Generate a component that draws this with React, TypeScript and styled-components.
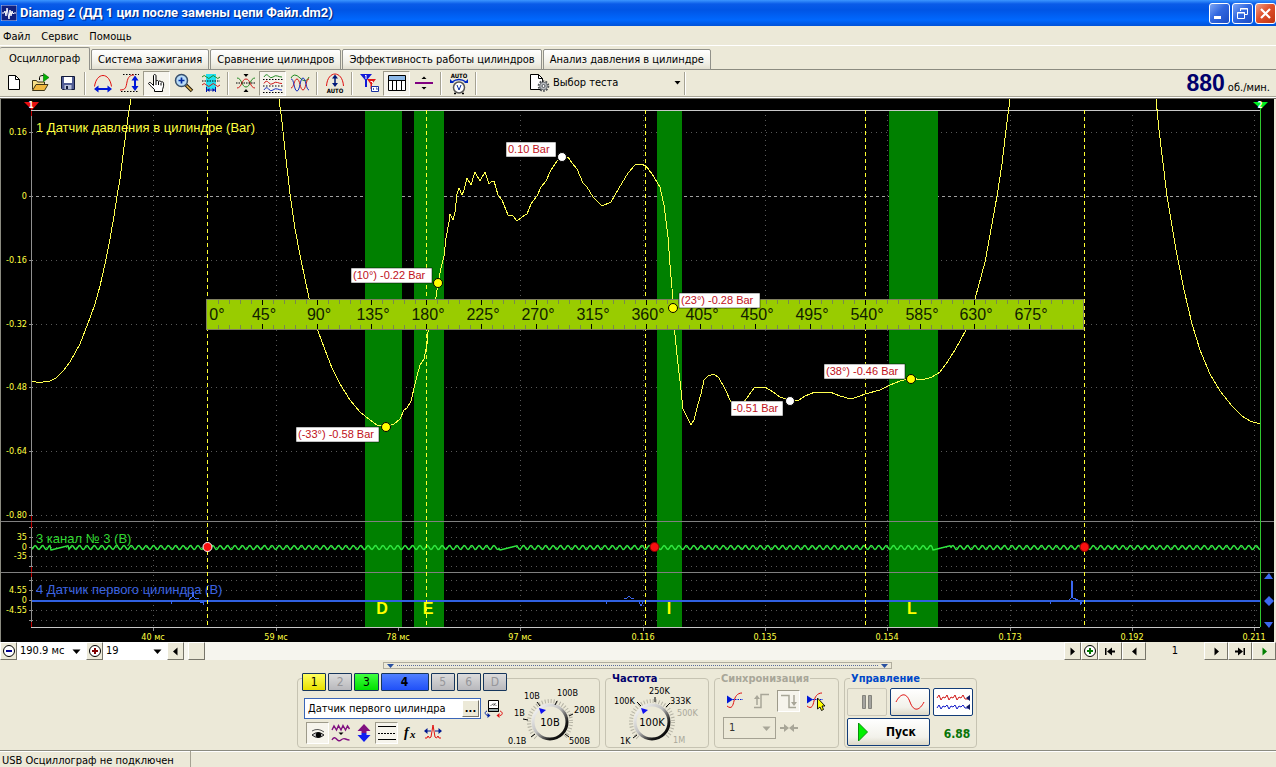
import React from 'react';
import styled, { createGlobalStyle, css } from 'styled-components';

const UI_FONT = '"DejaVu Sans Condensed", "DejaVu Sans", sans-serif';
const ARIAL = '"Liberation Sans", Arial, sans-serif';
const FACE = '#ece9d8';

const GlobalStyle = createGlobalStyle`
  *, *::before, *::after { box-sizing: border-box; }
  body { margin: 0; background: ${FACE}; color: #000; font: 11px/14px ${UI_FONT}; }
  button, input, select { font: inherit; color: inherit; margin: 0; padding: 0; }
  svg { display: block; flex: none; }
`;

/* ---------- window frame ---------- */

const Window = styled.div`
  display: flex;
  flex-direction: column;
  min-height: 100vh;
`;

const TitleBar = styled.header`
  display: flex;
  align-items: center;
  gap: 3px;
  height: 26px;
  padding: 0 0 0 1px;
  background: linear-gradient(#3c96ff 0, #0a5be8 4px, #0055e5 10px, #0068fe 20px, #0052d8 26px);
`;

const TitleText = styled.h1`
  flex: 1;
  margin: 0;
  color: #fff;
  font: bold 13px/18px Roboto, sans-serif;
  text-shadow: 1px 1px 1px #001e78;
  white-space: nowrap;
`;

const WindowButtons = styled.div`
  display: flex;
  gap: 2px;
`;

const WindowButton = styled.button<{ $close?: boolean }>`
  display: grid;
  place-items: center;
  width: 21px;
  height: 21px;
  border: 1px solid #fff;
  border-radius: 3px;
  background: ${(p) =>
    p.$close
      ? 'linear-gradient(135deg, #f0a088, #e0502c 45%, #c03410)'
      : 'linear-gradient(135deg, #7ea6f4, #3268e0 45%, #1c4cc4)'};
`;

const MenuBar = styled.nav`
  display: flex;
  gap: 11px;
  height: 20px;
  padding: 3px 3px 0;
  border-bottom: 1px solid #fff;
`;

const MenuItem = styled.button`
  border: 0;
  background: none;
  line-height: 14px;
`;

const TabStrip = styled.div`
  display: flex;
  align-items: flex-end;
  gap: 1px;
  height: 24px;
  box-shadow: inset 0 -1px #8b8b80;
`;

const Tab = styled.button<{ $active?: boolean }>`
  height: 21px;
  padding: 0 6px;
  border: 1px solid #91918a;
  border-radius: 2px 2px 0 0;
  background: linear-gradient(#fff, #f0efe6 70%, #e2dfd0);
  white-space: nowrap;
  ${(p) =>
    p.$active &&
    css`
      height: 23px;
      padding: 0 9px;
      border-width: 1px 1px 0 0;
      background: ${FACE};
    `}
`;

/* ---------- toolbar ---------- */

const Toolbar = styled.div`
  display: flex;
  align-items: center;
  height: 29px;
  padding-bottom: 2px;
  border-bottom: 1px solid #6c6a60;
  box-shadow: inset 0 -1px #fff, inset 0 -2px #aaa798;
`;

const ToolButton = styled.button<{ $pressed?: boolean }>`
  display: grid;
  place-items: center;
  width: 27px;
  height: 25px;
  border: 1px solid transparent;
  background: none;
  ${(p) =>
    p.$pressed &&
    css`
      border-color: #9d9a8a #fff #fff #9d9a8a;
      background: #f6f4ec;
    `}
`;

const Separator = styled.span`
  flex: none;
  width: 8px;
  height: 23px;
  background: linear-gradient(90deg, transparent 3px, #a5a293 3px 4px, #fff 4px 5px, transparent 5px);
`;

const TestPicker = styled.button`
  display: flex;
  align-items: center;
  gap: 3px;
  width: 152px;
  height: 24px;
  margin-left: 49px;
  border: 0;
  background: none;
  text-align: left;

  span { flex: 1; }
`;

const Rpm = styled.output`
  flex: 1;
  display: flex;
  justify-content: flex-end;
  align-items: baseline;
  gap: 3px;
  padding-right: 6px;

  b { color: #00006c; font: bold 23px/26px ${ARIAL}; }
`;

/* ---------- chart and navigation ---------- */

const ChartSvg = styled.svg`
  width: 100%;
  height: auto;
  background: #000;
`;

const NavBar = styled.div`
  display: flex;
  height: 19px;
  background: #fff;
  border-bottom: 1px solid ${FACE};
`;

const NavButton = styled.button<{ $wide?: boolean }>`
  display: grid;
  place-items: center;
  flex: none;
  width: ${(p) => (p.$wide ? 24 : 17)}px;
  height: 18px;
  border: 1px solid;
  border-color: #fff #77756a #77756a #fff;
  background: ${FACE};
`;

const NavTrack = styled.div`
  flex: 1;
  padding-left: 4px;
  background: #f6f5ee;
`;

const NavThumb = styled.div`
  width: 17px;
  height: 18px;
  border: 1px solid;
  border-color: #fff #77756a #77756a #fff;
  background: ${FACE};
`;

const PageNumber = styled.output`
  width: 58px;
  background: ${FACE};
  text-align: center;
  line-height: 18px;
`;

const Combo = styled.label<{ $width: number; $boxed?: boolean }>`
  display: grid;
  flex: none;
  width: ${(p) => p.$width}px;
  align-items: center;

  select, svg { grid-area: 1 / 1; }
  svg { justify-self: end; margin-right: 5px; pointer-events: none; }
  select {
    appearance: none;
    width: 100%;
    height: 18px;
    padding-left: 3px;
    border: 0;
    background: #fff;
    outline: 0;
  }
  ${(p) =>
    p.$boxed &&
    css`
      select {
        height: 22px;
        padding-left: 5px;
        border: 1px solid #a5a293;
        border-radius: 0;
        background: ${FACE};
        color: #333;
      }
    `}
`;

/* ---------- bottom panel ---------- */

const Panel = styled.section`
  flex: 1;
  display: flex;
  flex-direction: column;
  align-items: center;
  padding: 1px 2px 2px 0;
`;

const Splitter = styled.div`
  display: flex;
  align-items: center;
  gap: 3px;
  width: 509px;
  height: 7px;
  padding: 0 3px;
  border: 1px solid #b0ad9e;

  i { flex: 1; border-top: 1px dotted #5a6c9c; }
`;

const Groups = styled.div`
  display: flex;
  gap: 5px;
  margin-top: 9px;
`;

const Group = styled.section<{ $width: number }>`
  width: ${(p) => p.$width}px;
  height: 70px;
  border: 1px solid #c6c3b2;
  border-radius: 4px;
`;

const GroupTitle = styled.h2<{ $color: string }>`
  width: max-content;
  margin: -7px 0 0 5px;
  padding: 0 1px;
  background: ${FACE};
  color: ${(p) => p.$color};
  font: bold 11px/14px ${UI_FONT};
`;

const ChannelGroup = styled(Group)`
  display: flex;
`;

const ChannelColumn = styled.div`
  width: 209px;
  margin-top: -6px;
  padding-left: 4px;
`;

const ChannelRow = styled.div`
  display: flex;
  gap: 2px;
  background: ${FACE};
`;

const ChannelButton = styled.button<{ $fill?: string; $selected?: boolean }>`
  flex: ${(p) => (p.$selected ? '0 0 48px' : '1 1 0')};
  height: 18px;
  border: 1px solid #16365c;
  border-radius: 1px;
  color: ${(p) => (p.$fill ? '#000' : '#96969a')};
  background: ${(p) => p.$fill ?? 'linear-gradient(#dcdcdc, #b8b8bc)'};
  font-size: 12px;
  font-weight: ${(p) => (p.$selected ? 'bold' : 'normal')};
`;

const NameRow = styled.div`
  display: flex;
  align-items: center;
  gap: 3px;
  margin: 7px 0 3px 2px;
`;

const NameField = styled.div`
  display: flex;
  width: 177px;
  height: 21px;
  border: 1px solid #3a66b8;
  background: #fff;

  input {
    flex: 1;
    min-width: 0;
    padding-left: 3px;
    border: 0;
    background: none;
    outline: 0;
  }
  button {
    width: 17px;
    margin: 1px;
    border: 1px solid;
    border-color: #fff #77756a #77756a #fff;
    background: ${FACE};
    font-weight: bold;
    line-height: 8px;
  }
`;

const IconRow = styled.div`
  display: flex;
  padding-left: 4px;
`;

const SmallTool = styled.button<{ $pressed?: boolean }>`
  display: grid;
  place-items: center;
  width: 23px;
  height: 22px;
  border: 1px solid transparent;
  background: none;
  ${(p) =>
    p.$pressed &&
    css`
      border-color: #9d9a8a #fff #fff #9d9a8a;
      background: #f6f4ec;
    `}
`;

const KnobSvg = styled.svg`
  overflow: visible;
`;

const SyncGrid = styled.div`
  display: grid;
  grid-template-columns: repeat(4, 27px);
  align-items: center;
  gap: 5px 0;
  padding: 4px 0 0 8px;
`;

const SyncCombo = styled(Combo)`
  grid-column: span 2;
`;

const ControlGrid = styled.div`
  display: grid;
  grid-template-columns: 40px 40px 40px;
  gap: 2px 3px;
  padding: 2px 2px 0;
`;

const BigButton = styled.button<{ $disabled?: boolean; $white?: boolean }>`
  display: grid;
  place-items: center;
  height: 28px;
  border: 1px solid ${(p) => (p.$disabled ? '#c9c6b8' : '#123c78')};
  border-radius: 2px;
  background: ${(p) => (p.$white ? '#fff' : p.$disabled ? FACE : 'linear-gradient(#fff, #f2f1ea 70%, #dcd8c8)')};
`;

const StartButton = styled(BigButton)`
  grid-column: span 2;
  display: flex;
  align-items: center;
  gap: 17px;
  padding-left: 9px;
  font-size: 12px;
  font-weight: bold;
`;

const Voltage = styled.output`
  align-self: center;
  padding: 4px 0 0 8px;
  color: #087408;
  font: bold 12px/14px ${UI_FONT};
  text-align: center;
`;

const StatusBar = styled.footer`
  display: flex;
  height: 17px;
  border-top: 1px solid #8b8b80;
  box-shadow: inset 0 1px #fff;
`;

const StatusCell = styled.div`
  width: 191px;
  padding: 3px 0 0 2px;
  border-right: 1px solid #a5a293;
  line-height: 14px;
  white-space: nowrap;
`;

/* ---------- icons ---------- */

const Icon = ({ children, w = 20, h = 20 }: { children: React.ReactNode; w?: number; h?: number }) => (
  <svg width={w} height={h} viewBox={`0 0 ${w} ${h}`} fill="none" strokeWidth="1" aria-hidden="true">
    {children}
  </svg>
);

const Tri = ({ dir, color = '#000' }: { dir: 'l' | 'r' | 'd'; color?: string }) => (
  <Icon w={9} h={9}>
    <path d={{ l: 'M6.5 0.5v8L2 4.5z', r: 'M2.5 0.5v8L7 4.5z', d: 'M0.5 2.5h8L4.5 7z' }[dir]} fill={color} />
  </Icon>
);

const icons = {
  newDoc: <Icon><path d="M4.5 2.5h7l4 4v10h-11z" fill="#fff" stroke="#000" /><path d="M11.5 2.5v4h4" stroke="#000" /></Icon>,
  open: (
    <Icon>
      <path d="M1.5 16.500V7.500h4l1 1.500h7v3" fill="#f8e088" stroke="#3c3418" />
      <path d="M1.500 17.500l3.500-6h12l-3.500 6z" fill="#f0b840" stroke="#3c3418" />
      <path d="M8.500 7V4.500c0-1.500 1.500-2 4-2" stroke="#000" />
      <path d="M12.500 0.500l5.500 4-5.500 4z" fill="#00b400" stroke="#006400" strokeWidth=".6" />
    </Icon>
  ),
  save: (
    <Icon>
      <path d="M3.500 3.500h13v13h-12l-1-1z" fill="#505c94" stroke="#101838" />
      <path d="M6 4h8v6H6z" fill="#fff" />
      <path d="M6.500 12h7v4.500h-7z" fill="#b8c0d8" />
      <path d="M8 13h2v3H8z" fill="#101838" />
    </Icon>
  ),
  arcH: <Icon><path d="M1.500 13.500C2.500 6.500 6 2.500 10 2.500s7.500 4 8.500 11" stroke="#e01010" /><path d="M4 16h12" stroke="#0018d8" strokeWidth="2" /><path d="M1 16l4.500-3.500v7zM19 16l-4.500-3.500v7z" fill="#0018d8" /></Icon>,
  riseV: (
    <Icon>
      <path d="M3 1.500h16M1 18.500h17" stroke="#000" strokeDasharray="1.500 1.500" />
      <path d="M0 17c6 0 6-3 7-8s3-7 7-7" stroke="#e01010" />
      <path d="M15 6v9" stroke="#0018d8" strokeWidth="2" />
      <path d="M15 2.500l3.500 5h-7zM15 18l3.500-5h-7z" fill="#0018d8" />
    </Icon>
  ),
  hand: (
    <Icon>
      <path d="M7.500 18.500v-2C5.500 14.500 3 12.500 1.500 10.500c.5-1.500 2-1.200 3 0l2 2V3c0-2 2.500-2 2.500 0v5c1-1 2.500-.5 2.500.5 1-1 2.500-.5 2.500.7 1-.8 2.500-.3 2.500 1 .5 3-.5 4.500-1 6.300v2z" fill="#fff" stroke="#000" />
      <path d="M9 8v4M11.500 9v3M14 10v2.500" stroke="#000" />
    </Icon>
  ),
  zoom: (
    <Icon>
      <path d="M12 12l6 6" stroke="#201808" strokeWidth="3.500" />
      <path d="M12.500 12.500l5 5" stroke="#e8b850" strokeWidth="1.500" />
      <circle cx="7.500" cy="7.500" r="6" fill="#b8dcf8" stroke="#38506c" strokeWidth="1.500" />
      <path d="M4.500 7.500h6M7.500 4.500v6" stroke="#0028a0" strokeWidth="1.700" />
    </Icon>
  ),
  band: (
    <Icon>
      <path d="M5 1h10v15H5z" fill="#20e0f0" />
      <path d="M1 4q2.200-3 4.500 0t4.500 0 4.500 0 4.500 0" stroke="#208820" />
      <path d="M1 8h18" stroke="#000" strokeDasharray="1.500 1" />
      <path d="M1 12q2.200-3 4.500 0t4.500 0 4.500 0 4.500 0" stroke="#d01818" />
      <path d="M5.500 14v5M14.500 14v5M6 17h8" stroke="#0018a8" />
      <path d="M6 17l2.500-2v4zM14 17l-2.500-2v4z" fill="#0018a8" />
    </Icon>
  ),
  cross: (
    <Icon>
      <path d="M1 5c5 0 4.500 9 9 9s4-9 9-9" stroke="#208820" />
      <path d="M1 15c5 0 4.500-9 9-9s4 9 9 9" stroke="#d01818" />
      <path d="M0 10h20" stroke="#000" strokeDasharray="1.500 1" />
      <path d="M7.500 1h5L10 4zM7.500 19h5L10 16z" fill="#000" />
    </Icon>
  ),
  waves: (
    <Icon>
      <path d="M1 4q2.200-4 4.500-1t4.500 1 4.500-1 4.500 1" stroke="#208820" />
      <path d="M1 10.500q2.200-4 4.500-1t4.500 1 4.500-1 4.500 1" stroke="#d01818" />
      <path d="M1 17q2.200-4 4.500-1t4.500 1 4.500-1 4.500 1" stroke="#1830c0" />
      <path d="M0 6.500h20M0 13h20M0 19.500h20" stroke="#000" strokeDasharray="1.500 1.500" />
    </Icon>
  ),
  overlaid: (
    <Icon>
      <path d="M1 5q3-6 9 0t9-1" stroke="#208820" />
      <path d="M1 15C4 15 4 6 7 6s3 11 6 11 3-12 6-11" stroke="#d01818" />
      <path d="M1 6c3-1 3 12 6 12S10 5 13 5s3 12 6 12" stroke="#1830c0" />
    </Icon>
  ),
  auto: (
    <Icon>
      <path d="M1.500 13C2 5 6 1 10 1s8 4 8.500 12" stroke="#e01010" />
      <path d="M10 4v8" stroke="#001878" strokeWidth="1.500" />
      <path d="M10 1.500l3 4H7zM10 14l3-4H7z" fill="#001878" />
      <text x="10" y="20" textAnchor="middle" fontSize="6" fontWeight="bold" fontFamily={UI_FONT} fill="#000">AUTO</text>
    </Icon>
  ),
  markers: (
    <Icon>
      <path d="M0 1h12L7 7v7H5V7z" fill="#1018d8" />
      <path d="M7 6h9l-4 5v5h-1.500v-5z" fill="#e01818" />
      <path d="M5 3l1-1v4M10.500 8.500h2v1.500" stroke="#fff" />
      <path d="M11.500 13.500h7v5h-7z" fill="#fff" stroke="#1830a0" />
      <path d="M13.500 15v2M16 15h1v2" stroke="#1830a0" strokeWidth=".8" />
    </Icon>
  ),
  table: (
    <Icon>
      <path d="M1.500 2.500h17v15h-17z" fill="#fff" stroke="#000" />
      <path d="M2 3h16v4H2z" fill="#8cb8e8" />
      <path d="M1.500 7.500h17M5.500 7v10M9.500 7v10M14.500 7v10" stroke="#000" />
    </Icon>
  ),
  split: <Icon><path d="M1 10h18" stroke="#800080" strokeWidth="2" /><path d="M7.500 6h5L10 3.500zM7.500 14h5L10 16.500z" fill="#000" /></Icon>,
  autoGauge: (
    <Icon h={23}>
      <text x="10" y="6" textAnchor="middle" fontSize="6" fontWeight="bold" fontFamily={UI_FONT} fill="#000">AUTO</text>
      <path d="M3 10Q10 5 17 10" stroke="#0028c0" strokeWidth="1.500" />
      <path d="M1 11V7l4 4zM19 11V7l-4 4z" fill="#0028c0" />
      <circle cx="10" cy="15.500" r="5.500" fill="#fff" stroke="#555" strokeWidth="1.500" />
      <path d="M8 13l2 5 2-5" stroke="#0028a0" />
      <path d="M5 21.500h2M13 21.500h2" stroke="#000" strokeWidth="1.500" />
    </Icon>
  ),
  test: (
    <Icon w={21}>
      <path d="M1.500 1.500h8l4 4v11h-12z" fill="#fff" stroke="#000" />
      <path d="M9.500 1.500v4h4" stroke="#000" />
      <circle cx="14.500" cy="13" r="4.800" stroke="#505458" strokeWidth="2" strokeDasharray="1.800 1.200" />
      <circle cx="14.500" cy="13" r="3.800" fill="#b8bcc0" stroke="#707478" />
      <circle cx="14.500" cy="13" r="1.500" fill="#fff" stroke="#505458" />
    </Icon>
  ),
  eye: <Icon><path d="M4 8Q10 4.500 16 9" stroke="#555" /><path d="M4 12q6-5 12 0-6 5-12 0z" fill="#ccc" stroke="#222" /><circle cx="10.500" cy="12" r="2.700" fill="#000" /></Icon>,
  smooth: <Icon><path d="M1 7l2-4 2.500 4 2-4.500L10 7l2-4.500L14.500 7l2-4L18.500 6" stroke="#801080" strokeWidth="1.400" /><path d="M7.500 9.500h5L10 12z" fill="#000" /><path d="M1 17q2.200-4 4.500-1t4.500 1 4.500-1 4 1" stroke="#801080" strokeWidth="1.400" /></Icon>,
  upDown: <Icon><path d="M10 1l6.500 7h-4v2h-5V8h-4z" fill="#801080" /><path d="M10 19l6.500-7h-4v-2h-5v2h-4z" fill="#1020f0" /></Icon>,
  lines: <Icon><path d="M1 3.500h18M1 16.500h18" stroke="#000" /><path d="M1 10.500h18" stroke="#000" strokeDasharray="2 1" /></Icon>,
  fx: (
    <Icon>
      <g fontStyle="italic" fontWeight="bold" fontFamily="Liberation Serif, serif" fill="#000">
        <text x="4" y="14" fontSize="14">f</text>
        <text x="10" y="15" fontSize="11">x</text>
      </g>
    </Icon>
  ),
  pulse: <Icon><path d="M2 15h2l1-2 1.500 2L8 14l2-12 2 12 1.500 1 1.500-2 1 2h2" stroke="#e01010" /><path d="M3 8h5M12 8h5" stroke="#001890" /><path d="M1 8l3.500-3v6zM19 8l-3.500-3v6z" fill="#001890" /></Icon>,
  swap: (
    <Icon>
      <path d="M4.500 1.500h10v11h-10z" fill="#fff" stroke="#000" />
      <path d="M4.500 9.500h10v3h-10z" fill="#9aa" stroke="#000" />
      <path d="M6.500 7q3-4 6 0M9.500 7l2-3" stroke="#444" strokeWidth=".8" />
      <path d="M3 12c-3 1-2 4 1 4.500" stroke="#0020a0" /><path d="M3.500 14l3 2.500-3 2.500z" fill="#0020a0" />
      <path d="M16 12c3 1 3 4 0 4.500" stroke="#e01010" /><path d="M15.500 14l-3 2.500 3 2.500z" fill="#e01010" />
    </Icon>
  ),
  trigger: <Icon><path d="M2 15c5 4 6-1 7-5s3-8 8-8" stroke="#e01010" /><path d="M5 8.500h13" stroke="#0018d8" strokeDasharray="1.500 1" /><path d="M2 4.500l6 4-6 4z" fill="#0018d8" /></Icon>,
  rising: <Icon><path d="M2 16.500h7V3.500h8" stroke="#a8a698" strokeWidth="1.500" /><path d="M5 6v8" stroke="#a8a698" strokeWidth="1.500" /><path d="M5 4l3 4H2z" fill="#a8a698" /></Icon>,
  falling: <Icon><path d="M2 4.500h8v12h7" stroke="#a8a698" strokeWidth="1.500" /><path d="M15 4v8" stroke="#a8a698" strokeWidth="1.500" /><path d="M15 15l3-4h-6z" fill="#a8a698" /></Icon>,
  triggerPick: (
    <Icon>
      <path d="M1 15c5 4 6-1 7-5s3-8 8-8" stroke="#e01010" />
      <path d="M4 8.500h13" stroke="#0018d8" strokeDasharray="1.500 1" />
      <path d="M1 4.500l6 4-6 4z" fill="#0018d8" />
      <path d="M11.500 7v11l2.500-2 1.500 3.500 2-1-1.500-3.500h3z" fill="#ff0" stroke="#000" strokeWidth=".9" />
    </Icon>
  ),
  merge: <Icon><path d="M1 10h5M14 10h5" stroke="#a8a698" strokeWidth="2" /><path d="M5 6l5 4-5 4zM15 6l-5 4 5 4z" fill="#a8a698" /></Icon>,
  pause: <Icon><path d="M5.500 3.500h3v13h-3zM11.500 3.500h3v13h-3z" fill="#a4a4a0" stroke="#84847c" /></Icon>,
  sine: <Icon w={30}><path d="M1 10C5 2 11-1 15 10s10 8 14 0" stroke="#e01010" /></Icon>,
  rolls: (
    <Icon w={36}>
      <path d="M2 6l2-3 2 5 2-3 2 1 2-3 2 5 2-3 2 1 2-3 2 5 2-3 2 1 2-3 2 4h3" stroke="#d01818" />
      <path d="M2 16l2-3 2 4 2-3 2 1 2-2 2 4 2-3 2 1 2-2 2 4 2-3 2 1 2-2 2 3h3" stroke="#1018c8" />
      <path d="M35 3v6l-4-3zM35 12v6l-4-3z" fill="#101860" />
    </Icon>
  ),
  play: <Icon w={12}><path d="M1.500 1v18L10.500 10z" fill="#00f000" stroke="#089008" /></Icon>,
};

const toolGroups: { label: string; icon: React.ReactNode; pressed?: boolean }[][] = [
  [
    { label: 'Новый', icon: icons.newDoc },
    { label: 'Открыть', icon: icons.open },
    { label: 'Сохранить', icon: icons.save },
  ],
  [
    { label: 'Период', icon: icons.arcH },
    { label: 'Амплитуда', icon: icons.riseV },
    { label: 'Перемещение', icon: icons.hand, pressed: true },
    { label: 'Масштаб', icon: icons.zoom },
    { label: 'Интервал', icon: icons.band },
  ],
  [
    { label: 'Совместить', icon: icons.cross },
    { label: 'Раздельно', icon: icons.waves, pressed: true },
    { label: 'Наложить', icon: icons.overlaid },
  ],
  [{ label: 'Автомасштаб', icon: icons.auto }],
  [
    { label: 'Маркеры', icon: icons.markers },
    { label: 'Таблица', icon: icons.table, pressed: true },
    { label: 'Разделитель', icon: icons.split },
  ],
  [{ label: 'Автонастройка', icon: icons.autoGauge }],
];

/* ---------- oscilloscope chart ---------- */

const GRID_X = [
  [153, '40 мс'], [276, '59 мс'], [398, '78 мс'], [520, '97 мс'], [643, '0.116'],
  [765, '0.135'], [887, '0.154'], [1010, '0.173'], [1132, '0.192'], [1254, '0.211'],
] as const;
const GRID_Y = [
  [132, '0.16'], [196, '0'], [260, '-0.16'], [324, '-0.32'], [387, '-0.48'], [451, '-0.64'], [515, '-0.80'],
  [537, '35'], [547, '0'], [556, '-35'], [590, '4.55'], [600, '0'], [610, '-4.55'],
] as const;
const MINOR_Y = [527, 566, 580, 620];
const BANDS = [
  { x: 365, w: 37, name: 'D', cx: 382 },
  { x: 414, w: 30, name: 'E', cx: 428 },
  { x: 657, w: 25, name: 'I', cx: 669 },
  { x: 889, w: 49, name: 'L', cx: 912 },
];
const STROKES = [207, 426, 645, 865, 1084];

const PRESSURE = [
  '32,381 36,382 43,382 50,381 56,378 63,371 70,362 75,353 80,344 85,331 90,318 95,304 100,286 105,264 110,239 114,216 117,196 120,179 123,155 125,140 128,117 131,99',
  '279,99 282,122 285,150 290,194 295,229 301,260 309,298 318,331 325,350 332,368 340,384 350,400 360,412 370,420 377,425 386,427 394,424 400,419 404,410 407,408 411,401 416,380 420,365 424,359 427,344 428,332 432,320 436,297 438,283 441,268 444,256 446,238 449,222 450,214 453,220 455,212 457,194 459,188 462,195 464,190 467,178 471,185 475,172 480,181 485,172 489,184 492,181 494,181 498,195 502,200 508,215 513,216 517,221 522,217 527,214 531,204 537,196 541,187 546,181 551,170 557,161 562,157 568,157 572,163 577,169 583,183 587,187 593,197 602,206 611,202 619,188 628,173 635,165 641,164 646,166 652,174 660,187 664,205 668,237 670,265 673,300 674,325 677,355 681,390 683,409 687,417 691,425 694,420 697,408 701,394 704,380 708,376 714,374 719,378 725,389 731,402 737,408 744,402 749,395 755,387 765,387 773,392 780,397 786,399 790,401 799,400 805,396 815,392 822,393 830,392 840,396 851,399 860,396 865,394 880,390 890,385 900,381 911,378 922,380 932,377 940,372 946,364 955,350 966,330 975,299 985,262 990,235 997,196 1002,164 1006,130 1010,99',
  '1156,99 1159,130 1167,196 1176,250 1184,290 1192,324 1200,350 1210,374 1220,391 1232,406 1242,416 1250,421 1260,424',
];

const CHANNEL3 = Array.from({ length: 1229 }, (_, i) => {
  const x = 32 + i;
  const lull = [51, 500, 933].find((s) => x >= s && x < s + 18);
  const y = lull !== undefined ? 550 - (x - lull) / 4 : 547.5 + 2 * Math.sin((x * 2 * Math.PI) / 7.4);
  return `${x},${y.toFixed(1)}`;
}).join(' ');

const TAGS = [
  { x: 506, y: 142, w: 50, text: '0.10 Bar', dot: [562, 157, '#fff'] },
  { x: 351, y: 268, w: 81, text: '(10°) -0.22 Bar', dot: [438, 283, '#ff0'] },
  { x: 679, y: 293, w: 81, text: '(23°) -0.28 Bar', dot: [673, 308, '#ff0'] },
  { x: 824, y: 364, w: 81, text: '(38°) -0.46 Bar', dot: [911, 379, '#ff0'] },
  { x: 731, y: 401, w: 52, text: '-0.51 Bar', dot: [790, 401, '#fff'] },
  { x: 296, y: 427, w: 83, text: '(-33°) -0.58 Bar', dot: [386, 427, '#ff0'] },
] as const;

const degX = (deg: number) => Math.round(207 + (deg * 877) / 720);

const Chart = () => (
  <ChartSvg viewBox="0 99 1276 543" role="img" aria-label="Осциллограмма давления в цилиндре">
    <g shapeRendering="crispEdges" fill="none" strokeWidth="1">
      <path d="M0.500 99V642" stroke="#8b8b80" />
      <path d="M1275 99V642" stroke="#ece9d8" strokeWidth="2" />
      {GRID_X.map(([x]) => (
        <path key={x} d={`M${x}.500 115V627`} stroke="#585858" strokeDasharray="1 4" />
      ))}
      {[...GRID_Y.map(([y]) => y), ...MINOR_Y].map((y) => (
        <React.Fragment key={y}>
          <path
            d={`M36 ${y}.500H1259`}
            stroke={y === 196 ? '#a0a0a0' : '#585858'}
            strokeDasharray={y === 196 ? '3 3' : '1 4'}
          />
          <path d={`M29 ${y}.500h4`} stroke="#909090" />
        </React.Fragment>
      ))}
      {BANDS.map((b) => <rect key={b.name} x={b.x} y="110" width={b.w} height="517" fill="#008000" />)}
      <path d="M31.500 110V627" stroke="#909090" />
      <path d="M31.500 516v12M31.500 567v10M31.500 622v5M31.500 108v8" stroke="#c00000" />
      <path d="M31 110.500H1260M31 627.500H1260" stroke="#c8c8c8" />
      <path d="M1 521.500H1274M1 572.500H1274" stroke="#808080" />
      {GRID_X.map(([x]) => <path key={x} d={`M${x}.500 628v3`} stroke="#909090" />)}
      <path d="M1260.500 108V627" stroke="#30c830" />
    </g>

    <g fontFamily={ARIAL} fontSize="13">
      <text x="36" y="132" fill="#ffff40">1 Датчик давления в цилиндре (Bar)</text>
      <text x="36" y="543" fill="#30d830">3 канал № 3 (В)</text>
      <text x="36" y="594" fill="#3c64e0">4 Датчик первого цилиндра (В)</text>
    </g>

    <polyline points={CHANNEL3} stroke="#30e840" strokeWidth="1.4" fill="none" />
    <g shapeRendering="crispEdges" fill="none" strokeWidth="1">
      {PRESSURE.map((points) => <polyline key={points} points={points} stroke="#ffff50" />)}
      <path d="M32 601H1260" stroke="#3060e0" strokeWidth="2" />
      <path
        d="M171 602v2M171 601h2M189 600l2-3h1l1-5 1 5 1 1h4M200 602h3v3M606 602v2M624 599l3-1 2-2 2 2 3 1M639 602l2 4 2-4M1050 602v2M1069 600l2-2 1-17 1 17 5 2M1080 602v3l2-3"
        stroke="#3c68f0"
      />
      {STROKES.map((x) => <path key={x} d={`M${x}.500 110V627`} stroke="#ffff30" strokeDasharray="4 3" />)}
    </g>

    <g fontFamily={UI_FONT} fill="#ffff40">
      {GRID_Y.map(([y, label]) => (
        <text key={y} x="27" y={y + 3} textAnchor="end" fontSize="9">{label}</text>
      ))}
      {GRID_X.map(([x, label]) => (
        <text key={x} x={x} y="640" textAnchor="middle" fontSize="9">{label}</text>
      ))}
    </g>
    <g fontFamily={ARIAL} fontSize="16" fontWeight="bold" fill="#ff0" textAnchor="middle">
      {BANDS.map((b) => <text key={b.name} x={b.cx} y="614">{b.name}</text>)}
    </g>

    <g shapeRendering="crispEdges">
      <rect x="206.500" y="299.500" width="877" height="30" fill="#9c0" stroke="#808060" />
      {Array.from({ length: 79 }, (_, i) => (i + 1) * 9).map((deg) => {
        const major = deg % 45 === 0;
        const len = major ? 5 : 4;
        return (
          <path
            key={deg}
            d={`M${degX(deg)}.500 300v${len}M${degX(deg)}.500 329v-${len}`}
            stroke={major ? '#000' : '#788850'}
          />
        );
      })}
    </g>
    <g fontFamily={ARIAL} fontSize="16" fill="#102000" textAnchor="middle">
      {Array.from({ length: 16 }, (_, i) => i * 45).map((deg) => (
        <text key={deg} x={deg === 0 ? 217 : degX(deg) + 2} y="320">{deg}°</text>
      ))}
    </g>

    {TAGS.map((t) => (
      <g key={t.text}>
        <rect x={t.x} y={t.y} width={t.w} height="15" fill="#fff" stroke="#000" strokeWidth=".5" />
        <text x={t.x + 2} y={t.y + 11} fontFamily={ARIAL} fontSize="11" fill="#c01020">{t.text}</text>
        <circle cx={t.dot[0]} cy={t.dot[1]} r="4.5" fill={t.dot[2]} stroke="#000" />
      </g>
    ))}
    {[207.5, 654.5, 1084.5].map((x, i) => (
      <circle key={x} cx={x} cy="547" r="4.5" fill="#f81010" stroke={i === 0 ? '#fff' : '#800'} />
    ))}

    <path d="M24 102h15l-7 8z" fill="#e81010" />
    <path d="M1253 102h15l-7 7z" fill="#00f020" />
    <g fontFamily={UI_FONT} fontSize="8" fontWeight="bold" fill="#fff" textAnchor="middle">
      <text x="31" y="108">1</text>
      <text x="1260" y="108">2</text>
    </g>
    <path d="M1264 579h9l-4-6zM1264 622h9l-4 6zM1269 596l5 5-5 5-5-5z" fill="#3c68f0" />
  </ChartSvg>
);

/* ---------- knobs ---------- */

type KnobProps = {
  box: string;
  width: number;
  height: number;
  cx: number;
  cy: number;
  value: string;
  labels: { x: number; y: number; text: string; dim?: boolean }[];
  marks: string;
};

const Knob = ({ box, width, height, cx, cy, value, labels, marks }: KnobProps) => (
  <KnobSvg width={width} height={height} viewBox={box} role="img" aria-label={value}>
    <defs>
      <linearGradient id={`rim-${value}`} x1="0" y1="0" x2="1" y2="1">
        <stop offset="0" stopColor="#fff" />
        <stop offset=".45" stopColor="#c0c0c0" />
        <stop offset=".75" stopColor="#181818" />
        <stop offset="1" stopColor="#000" />
      </linearGradient>
    </defs>
    <circle cx={cx} cy={cy} r="21" fill="none" stroke="#b4b2a4" strokeWidth="4" strokeDasharray="1 2" />
    <path d={`M${cx} ${cy}L${cx - 22} ${cy + 25}h44z`} fill={FACE} />
    <circle cx={cx} cy={cy} r="17" fill={FACE} stroke={`url(#rim-${value})`} strokeWidth="3" />
    <path d={marks} stroke="#000" fill="none" />
    <path d={`M${cx - 11} ${cy - 14}l7 2-5 4z`} fill="#1010f0" />
    <g fontFamily={UI_FONT} fontSize="9">
      {labels.map((l) => (
        <text key={l.text} x={l.x} y={l.y} fill={l.dim ? '#aaa89a' : '#000'}>{l.text}</text>
      ))}
      <text x={cx} y={cy + 4} textAnchor="middle" fontSize="11">{value}</text>
    </g>
  </KnobSvg>
);

const CHANNELS = [
  { name: '1', fill: 'linear-gradient(#ffff60, #e8e000)' },
  { name: '2' },
  { name: '3', fill: 'linear-gradient(#40ff40, #00e000)' },
  { name: '4', fill: 'linear-gradient(#5080ff, #2050f8)', selected: true },
  { name: '5' },
  { name: '6' },
  { name: 'D' },
];

const TABS = ['Осциллограф', 'Система зажигания', 'Сравнение цилиндров', 'Эффективность работы цилиндров', 'Анализ давления в цилиндре'];

export default function App() {
  return (
    <Window>
      <GlobalStyle />
      <TitleBar>
        <Icon w={16} h={16}>
          <path d="M0 0h16v16H0z" fill="#102080" stroke="#b8d0ff" />
          <path d="M1 8h2l1-2 1 5 1-8 2 11 1-9 1 6 1-5 1 3 1-1h2" stroke="#fff" />
        </Icon>
        <TitleText>Diamag 2 (ДД 1 цил после замены цепи Файл.dm2)</TitleText>
        <WindowButtons>
          <WindowButton aria-label="Свернуть"><Icon w={13} h={13}><path d="M1 9h7v3H1z" fill="#fff" /></Icon></WindowButton>
          <WindowButton aria-label="Развернуть">
            <Icon w={13} h={13}><path d="M4.500 4V1.500h7v6H9M1.500 5.500h7v6h-7zM1 6h8M4 2h8" stroke="#fff" /></Icon>
          </WindowButton>
          <WindowButton $close aria-label="Закрыть"><Icon w={13} h={13}><path d="M2 2l9 9M11 2l-9 9" stroke="#fff" strokeWidth="2.200" /></Icon></WindowButton>
        </WindowButtons>
      </TitleBar>

      <MenuBar>
        <MenuItem>Файл</MenuItem>
        <MenuItem>Сервис</MenuItem>
        <MenuItem>Помощь</MenuItem>
      </MenuBar>

      <TabStrip role="tablist">
        {TABS.map((name, i) => (
          <Tab key={name} role="tab" aria-selected={i === 0} $active={i === 0}>{name}</Tab>
        ))}
      </TabStrip>

      <Toolbar>
        {toolGroups.map((group, i) => (
          <React.Fragment key={i}>
            {group.map((t) => (
              <ToolButton key={t.label} aria-label={t.label} $pressed={t.pressed}>{t.icon}</ToolButton>
            ))}
            <Separator />
          </React.Fragment>
        ))}
        <TestPicker>
          {icons.test}
          <span>Выбор теста</span>
          <Icon w={7} h={4}><path d="M0.500 0h6L3.500 3.500z" fill="#000" /></Icon>
        </TestPicker>
        <Separator />
        <Rpm><b>880</b>об./мин.</Rpm>
      </Toolbar>

      <Chart />

      <NavBar>
        <NavButton aria-label="Уменьшить">
          <Icon w={14} h={14}><circle cx="7" cy="7" r="5.500" fill="#fff" stroke="#000" /><path d="M4 7h6" stroke="#000090" strokeWidth="2" /></Icon>
        </NavButton>
        <Combo $width={69}>
          <select aria-label="Развёртка" defaultValue="190.9 мс"><option>190.9 мс</option></select>
          <Tri dir="d" />
        </Combo>
        <NavButton aria-label="Увеличить">
          <Icon w={14} h={14}><circle cx="7" cy="7" r="5.500" fill="#fff" stroke="#000" /><path d="M4 7h6M7 4v6" stroke="#800000" strokeWidth="2" /></Icon>
        </NavButton>
        <Combo $width={64}>
          <select aria-label="Масштаб" defaultValue="19"><option>19</option></select>
          <Tri dir="d" />
        </Combo>
        <NavButton aria-label="Прокрутить влево"><Tri dir="l" /></NavButton>
        <NavTrack><NavThumb /></NavTrack>
        <NavButton aria-label="Прокрутить вправо"><Tri dir="r" /></NavButton>
        <NavButton aria-label="Добавить кадр">
          <Icon w={14} h={14}><circle cx="7" cy="7" r="5.500" fill="#fff" stroke="#000" /><path d="M4 7h6M7 4v6" stroke="#007800" strokeWidth="2" /></Icon>
        </NavButton>
        <NavButton $wide aria-label="Первый кадр"><Icon w={12} h={9}><path d="M1 1h1.500v7H1zM8 0.500v8L3 4.500zM8 3.500h3v2H8z" fill="#000" /></Icon></NavButton>
        <NavButton $wide aria-label="Предыдущий кадр"><Tri dir="l" /></NavButton>
        <PageNumber>1</PageNumber>
        <NavButton $wide aria-label="Следующий кадр"><Tri dir="r" /></NavButton>
        <NavButton $wide aria-label="Последний кадр"><Icon w={12} h={9}><path d="M9.500 1H11v7H9.500zM4 0.500v8l5-4zM1 3.500h3v2H1z" fill="#000" /></Icon></NavButton>
        <NavButton $wide aria-label="Воспроизвести"><Tri dir="r" color="#008000" /></NavButton>
      </NavBar>

      <Panel>
        <Splitter>
          <Icon w={7} h={4}><path d="M0 0h7L3.500 4z" fill="#2850a0" /></Icon>
          <i />
          <Icon w={7} h={4}><path d="M0 0h7L3.500 4z" fill="#2850a0" /></Icon>
        </Splitter>
        <Groups>
          <ChannelGroup $width={303}>
            <ChannelColumn>
              <ChannelRow>
                {CHANNELS.map((c) => (
                  <ChannelButton key={c.name} $fill={c.fill} $selected={c.selected}>{c.name}</ChannelButton>
                ))}
              </ChannelRow>
              <NameRow>
                <NameField>
                  <input aria-label="Название канала" defaultValue="Датчик первого цилиндра" />
                  <button aria-label="Выбрать датчик">...</button>
                </NameField>
                {icons.swap}
              </NameRow>
              <IconRow>
                <SmallTool $pressed aria-label="Показать канал">{icons.eye}</SmallTool>
                <SmallTool aria-label="Сглаживание">{icons.smooth}</SmallTool>
                <SmallTool aria-label="Инверсия">{icons.upDown}</SmallTool>
                <SmallTool $pressed aria-label="Линии">{icons.lines}</SmallTool>
                <SmallTool aria-label="Функция">{icons.fx}</SmallTool>
                <SmallTool aria-label="Импульс">{icons.pulse}</SmallTool>
              </IconRow>
            </ChannelColumn>
            <Knob
              box="508 679 87 68" width={87} height={68} cx={551} cy={722} value="10В"
              marks="M538 702l3 4M558 701l-2 4M524 719l5 1M574 714l-4 2M532 737l4-3M570 737l-4-3"
              labels={[
                { x: 525, y: 699, text: '10В' }, { x: 558, y: 696, text: '100В' }, { x: 515, y: 716, text: '1В' },
                { x: 575, y: 713, text: '200В' }, { x: 509, y: 744, text: '0.1В' }, { x: 570, y: 744, text: '500В' },
              ]}
            />
          </ChannelGroup>

          <Group $width={104}>
            <GroupTitle $color="#00006c">Частота</GroupTitle>
            <Knob
              box="607 686 102 61" width={102} height={61} cx={653} cy={722} value="100K"
              marks="M638 702l4 4M656 697v5M671 703l-4 4M634 738l4-3"
              labels={[
                { x: 650, y: 694, text: '250K' }, { x: 615, y: 704, text: '100K' }, { x: 671, y: 704, text: '333K' },
                { x: 678, y: 716, text: '500K', dim: true }, { x: 621, y: 744, text: '1K' }, { x: 674, y: 743, text: '1M', dim: true },
              ]}
            />
          </Group>

          <Group $width={125}>
            <GroupTitle $color="#a8a698">Синхронизация</GroupTitle>
            <SyncGrid>
              <SmallTool aria-label="Уровень">{icons.trigger}</SmallTool>
              <SmallTool aria-label="По фронту">{icons.rising}</SmallTool>
              <SmallTool $pressed aria-label="По спаду">{icons.falling}</SmallTool>
              <SmallTool aria-label="Указать уровень">{icons.triggerPick}</SmallTool>
              <SyncCombo $width={53} $boxed>
                <select aria-label="Канал синхронизации" defaultValue="1"><option>1</option></select>
                <Tri dir="d" color="#a8a698" />
              </SyncCombo>
              <SmallTool aria-label="Совместить">{icons.merge}</SmallTool>
            </SyncGrid>
          </Group>

          <Group $width={133}>
            <GroupTitle $color="#0048c8">Управление</GroupTitle>
            <ControlGrid>
              <BigButton $disabled aria-label="Пауза">{icons.pause}</BigButton>
              <BigButton aria-label="Один сигнал">{icons.sine}</BigButton>
              <BigButton $white aria-label="Все сигналы">{icons.rolls}</BigButton>
              <StartButton>{icons.play}Пуск</StartButton>
              <Voltage>6.88</Voltage>
            </ControlGrid>
          </Group>
        </Groups>
      </Panel>

      <StatusBar>
        <StatusCell>USB Осциллограф не подключен</StatusCell>
      </StatusBar>
    </Window>
  );
}
